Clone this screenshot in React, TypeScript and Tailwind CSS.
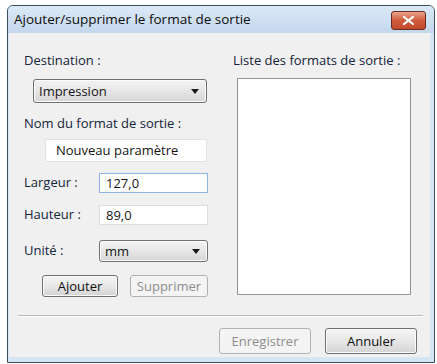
import { ReactNode } from "react";

const font = { fontFamily: '"Segoe UI", "Open Sans", "Noto Sans", sans-serif' };

function Combo({ value, className }: { value: string; className: string }) {
  return (
    <div
      className={`flex items-center justify-between rounded-[3px] border border-[#707070] bg-gradient-to-b from-[#f3f3f3] via-[#e6e6e6] to-[#d6d6d6] pl-[5px] pr-[7px] shadow-[inset_0_0_0_1px_#fcfcfc] ${className}`}
    >
      <span className="text-[13px] leading-none text-[#151515]">{value}</span>
      <svg width="8" height="5" viewBox="0 0 8 5">
        <path d="M0 0h8L4 5z" fill="#1a1a1a" />
      </svg>
    </div>
  );
}

function Field({ value, className }: { value: string; className: string }) {
  return (
    <div
      className={`flex items-center border bg-white pl-[6px] text-[13px] leading-none text-[#151515] ${className}`}
    >
      {value}
    </div>
  );
}

function Btn({
  children,
  disabled,
  className,
}: {
  children: ReactNode;
  disabled?: boolean;
  className: string;
}) {
  return (
    <div
      className={`flex items-center justify-center rounded-[3px] border text-[13px] leading-none ${
        disabled
          ? "border-[#adb2b5] bg-[#f4f4f4] text-[#8d8d8d]"
          : "border-[#707070] bg-gradient-to-b from-[#f5f5f5] via-[#e8e8e8] to-[#d3d3d3] text-[#111] shadow-[inset_0_0_0_1px_#fbfbfb]"
      } ${className}`}
    >
      {children}
    </div>
  );
}

function Row({ label, children, className }: { label: string; children: ReactNode; className: string }) {
  return (
    <div className={`flex items-center ${className}`}>
      <span className="w-[75px] text-[13px] text-[#14243a]">{label}</span>
      {children}
    </div>
  );
}

export default function App() {
  return (
    <div className="h-[364px] w-[437px] bg-white pl-[7px] pt-[5px]" style={font}>
      <div className="flex h-[358px] w-[428px] flex-col rounded-t-[6px] border border-[#3b4d5a] bg-[#d6e5f3]">
        {/* title bar */}
        <div className="flex h-[27px] items-center justify-between rounded-t-[5px] bg-gradient-to-b from-[#dce9f6] to-[#c3d7ed] pl-[6px] pr-[8px]">
          <span className="text-[13.5px] text-[#0d0d0d]">Ajouter/supprimer le format de sortie</span>
          <div className="mt-[2px] flex h-[19px] w-[35px] items-center justify-center rounded-[3px] border border-[#6b2a1e] bg-gradient-to-b from-[#e9a58c] via-[#cf5b3c] to-[#c24a2c]">
            <svg width="11" height="9" viewBox="0 0 11 9">
              <path d="M1 1l9 7M10 1L1 8" stroke="#fff" strokeWidth="2.2" strokeLinecap="square" />
            </svg>
          </div>
        </div>

        {/* body */}
        <div className="mb-[5px] ml-[1px] mr-[4px] flex flex-1 flex-col bg-[#f0f0f0]">
          <div className="flex">
            <div className="w-[210px] pl-[15px] pt-[19px]">
              <div className="h-[16px] text-[13px] leading-[16px] text-[#14243a]">Destination :</div>
              <Combo value="Impression" className="ml-[9px] mt-[11px] h-[24px] w-[174px]" />
              <div className="mt-[12px] h-[16px] text-[13px] leading-[16px] text-[#14243a]">
                Nom du format de sortie :
              </div>
              <Field value="Nouveau paramètre" className="ml-[21px] mt-[8px] h-[23px] w-[162px] border-[#dfe3e8] pl-[10px]" />
              <Row label="Largeur :" className="mt-[11px] h-[20px]">
                <Field value="127,0" className="h-[20px] w-[109px] border-[#8db2e3]" />
              </Row>
              <Row label="Hauteur :" className="mt-[12px] h-[20px]">
                <Field value="89,0" className="h-[20px] w-[109px] border-[#dadee3]" />
              </Row>
              <Row label="Unité :" className="mt-[15px] h-[22px]">
                <Combo value="mm" className="h-[22px] w-[109px]" />
              </Row>
              <div className="mt-[13px] flex h-[22px]">
                <Btn className="ml-[18px] w-[76px]">Ajouter</Btn>
                <Btn disabled className="ml-[12px] w-[78px]">
                  Supprimer
                </Btn>
              </div>
            </div>

            <div className="pl-[14px] pt-[19px]">
              <div className="h-[16px] text-[13px] leading-[16px] text-[#14243a]">
                Liste des formats de sortie :
              </div>
              <div className="ml-[4px] mt-[10px] h-[217px] w-[174px] border border-[#8f949b] bg-white" />
            </div>
          </div>

          <div className="ml-[9px] mr-[7px] mt-[18px] h-[2px] border-t border-b border-t-[#b9b9b9] border-b-white" />

          <div className="mr-[13px] mt-[11px] flex justify-end gap-[14px]">
            <Btn disabled className="h-[26px] w-[92px]">
              Enregistrer
            </Btn>
            <Btn className="h-[26px] w-[92px]">Annuler</Btn>
          </div>
        </div>
      </div>
    </div>
  );
}
